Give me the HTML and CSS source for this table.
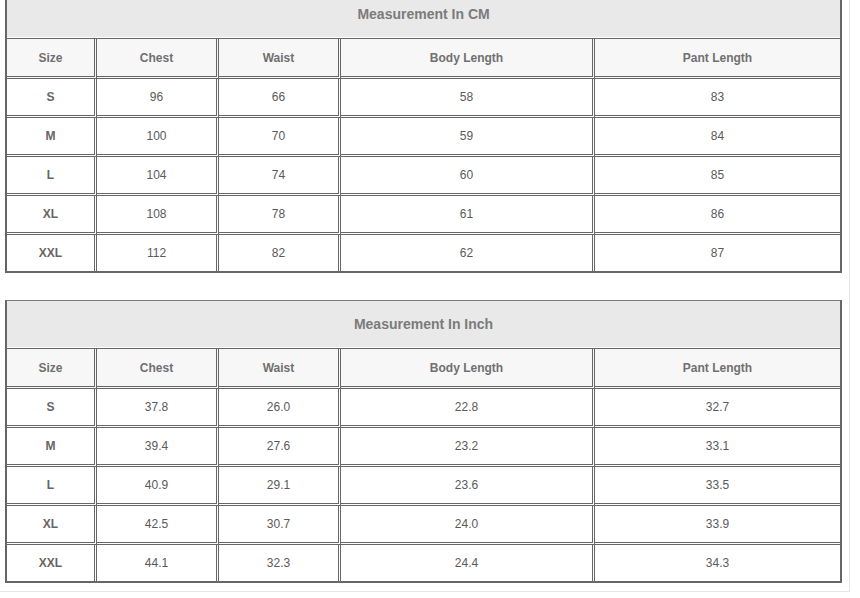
FILE: index.html
```html
<!DOCTYPE html>
<html>
<head>
<meta charset="utf-8">
<link rel="stylesheet" href="styles.css">
</head>
<body>
<div class="sheet">
  <table class="size-table">
    <colgroup>
      <col class="c-size"><col class="c-chest"><col class="c-waist"><col class="c-body"><col class="c-pant">
    </colgroup>
    <tr><th class="cap" colspan="5">Measurement In CM</th></tr>
    <tr class="head"><th>Size</th><th>Chest</th><th>Waist</th><th>Body Length</th><th>Pant Length</th></tr>
    <tr><td class="sz">S</td><td>96</td><td>66</td><td>58</td><td>83</td></tr>
    <tr><td class="sz">M</td><td>100</td><td>70</td><td>59</td><td>84</td></tr>
    <tr><td class="sz">L</td><td>104</td><td>74</td><td>60</td><td>85</td></tr>
    <tr><td class="sz">XL</td><td>108</td><td>78</td><td>61</td><td>86</td></tr>
    <tr><td class="sz">XXL</td><td>112</td><td>82</td><td>62</td><td>87</td></tr>
  </table>
  <table class="size-table">
    <colgroup>
      <col class="c-size"><col class="c-chest"><col class="c-waist"><col class="c-body"><col class="c-pant">
    </colgroup>
    <tr><th class="cap" colspan="5">Measurement In Inch</th></tr>
    <tr class="head"><th>Size</th><th>Chest</th><th>Waist</th><th>Body Length</th><th>Pant Length</th></tr>
    <tr><td class="sz">S</td><td>37.8</td><td>26.0</td><td>22.8</td><td>32.7</td></tr>
    <tr><td class="sz">M</td><td>39.4</td><td>27.6</td><td>23.2</td><td>33.1</td></tr>
    <tr><td class="sz">L</td><td>40.9</td><td>29.1</td><td>23.6</td><td>33.5</td></tr>
    <tr><td class="sz">XL</td><td>42.5</td><td>30.7</td><td>24.0</td><td>33.9</td></tr>
    <tr><td class="sz">XXL</td><td>44.1</td><td>32.3</td><td>24.4</td><td>34.3</td></tr>
  </table>
</div>
</body>
</html>
```
FILE: styles.css
```css
html, body {
  margin: 0;
  padding: 0;
  background: #fff;
}
body {
  font-family: "Liberation Sans", Arial, sans-serif;
}
.sheet {
  width: 837px;
  margin-top: -10px;
  padding: 0 7px 8px 5px;
  border-right: 1px solid #e6e6e6;
  border-bottom: 1px solid #e6e6e6;
}
.size-table {
  width: 837px;
  table-layout: fixed;
  border-collapse: separate;
  border-spacing: 0;
  border: 2px solid #666;
  border-top: 1px solid #7a7a7a;
  margin-bottom: 27px;
  background: #fff;
}
.size-table:last-child {
  margin-bottom: 0;
}
.c-size { width: 90px; }
.c-chest { width: 122px; }
.c-waist { width: 122px; }
.c-body { width: 254px; }
.c-pant { width: 245px; }
.size-table th,
.size-table td {
  padding: 0;
  text-align: center;
  vertical-align: middle;
  font-size: 12px;
  color: #5a5a5a;
  line-height: 36px;
  border-right: 3px double #666;
  border-bottom: 3px double #666;
}
.size-table th:last-child,
.size-table td:last-child {
  border-right: 0;
}
.size-table tr:last-child td {
  border-bottom: 0;
}
.size-table th.cap {
  background: #e9e9e9;
  line-height: 46px;
  font-size: 14px;
  font-weight: bold;
  color: #7b7b7b;
  border-right: 0;
  border-bottom: 1px solid #fff;
}
.head th {
  background: #f7f7f7;
  border-top: 1px solid #666;
  padding-top: 1px;
  line-height: 36px;
  font-weight: bold;
  color: #707070;
}
.size-table td.sz {
  font-weight: bold;
  color: #666;
}
```
